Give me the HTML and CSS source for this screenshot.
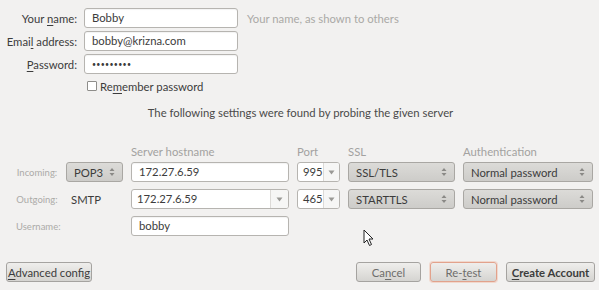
FILE: index.html
```html
<!DOCTYPE html>
<html lang="en">
<head>
  <meta charset="UTF-8" />
  <title>Mail Account Setup</title>
  <link rel="stylesheet" href="styles.css">
</head>
<body>
  <div class="dialog">
    <div class="identity">
      <label class="field-label">Your <u>n</u>ame:</label>
      <div class="entry">Bobby</div>
      <span class="hint">Your name, as shown to others</span>

      <label class="field-label">Emai<u>l</u> address:</label>
      <div class="entry">bobby@krizna.com</div>
      <span></span>

      <label class="field-label"><u>P</u>assword:</label>
      <div class="entry dots">&bull;&bull;&bull;&bull;&bull;&bull;&bull;&bull;&bull;</div>
      <span></span>
    </div>

    <div class="remember"><span class="check"></span>Re<u>m</u>ember password</div>

    <p class="probe-note">The following settings were found by probing the given server</p>

    <div class="server">
      <span></span>
      <span></span>
      <span class="col-head">Server hostname</span>
      <span class="col-head">Port</span>
      <span class="col-head">SSL</span>
      <span class="col-head">Authentication</span>

      <span class="row-label">Incoming:</span>
      <div class="combo">POP3<svg class="spin" width="6" height="10" viewBox="0 0 6 10"><path d="M3 1 L5.5 4 H0.5 Z M3 9 L0.5 6 H5.5 Z" fill="#8a8986"/></svg></div>
      <div class="entry">172.27.6.59</div>
      <div class="entry-combo"><span class="value">995</span><span class="drop"><svg width="7" height="5" viewBox="0 0 7 5"><path d="M0.5 0.5 H6.5 L3.5 4.5 Z" fill="#9a9996"/></svg></span></div>
      <div class="combo">SSL/TLS<svg class="spin" width="6" height="10" viewBox="0 0 6 10"><path d="M3 1 L5.5 4 H0.5 Z M3 9 L0.5 6 H5.5 Z" fill="#8a8986"/></svg></div>
      <div class="combo">Normal password<svg class="spin" width="6" height="10" viewBox="0 0 6 10"><path d="M3 1 L5.5 4 H0.5 Z M3 9 L0.5 6 H5.5 Z" fill="#8a8986"/></svg></div>

      <span class="row-label">Outgoing:</span>
      <span class="proto">SMTP</span>
      <div class="entry-combo"><span class="value">172.27.6.59</span><span class="drop wide"><svg width="7" height="5" viewBox="0 0 7 5"><path d="M0.5 0.5 H6.5 L3.5 4.5 Z" fill="#9a9996"/></svg></span></div>
      <div class="entry-combo"><span class="value">465</span><span class="drop"><svg width="7" height="5" viewBox="0 0 7 5"><path d="M0.5 0.5 H6.5 L3.5 4.5 Z" fill="#9a9996"/></svg></span></div>
      <div class="combo">STARTTLS<svg class="spin" width="6" height="10" viewBox="0 0 6 10"><path d="M3 1 L5.5 4 H0.5 Z M3 9 L0.5 6 H5.5 Z" fill="#8a8986"/></svg></div>
      <div class="combo">Normal password<svg class="spin" width="6" height="10" viewBox="0 0 6 10"><path d="M3 1 L5.5 4 H0.5 Z M3 9 L0.5 6 H5.5 Z" fill="#8a8986"/></svg></div>

      <span class="row-label">Username:</span>
      <span></span>
      <div class="entry">bobby</div>
    </div>

    <div class="footer">
      <button class="btn advanced"><u>A</u>dvanced config</button>
      <div class="actions">
        <button class="btn cancel">Ca<u>n</u>cel</button>
        <button class="btn retest">Re-<u>t</u>est</button>
        <button class="btn create"><u>C</u>reate Account</button>
      </div>
    </div>

    <svg class="pointer" width="12" height="18" viewBox="0 0 12 18"><path d="M1 1 V14 L4 11 L6.5 16.5 L8.5 15.5 L6 10 H10 Z" fill="#fff" stroke="#222" stroke-width="1"/></svg>
  </div>
</body>
</html>
```

FILE: styles.css
```css
body {
  margin: 0;
  background: #f2f1f0;
  color: #3c3c3c;
  font-family: Lato, sans-serif;
  font-size: 11.3px;
}
u {
  text-underline-offset: 2px;
}
.dialog {
  position: relative;
  height: 290px;
  box-sizing: border-box;
  padding: 8px 4px 0 6px;
}
.identity {
  display: grid;
  grid-template-columns: 71px 154px auto;
  grid-auto-rows: 20px;
  column-gap: 7px;
  row-gap: 3px;
  align-items: center;
}
.field-label {
  text-align: right;
  white-space: nowrap;
}
.hint {
  color: #aaa9a6;
  padding-left: 2px;
}
.entry {
  height: 20px;
  box-sizing: border-box;
  border: 1px solid #b6b4b0;
  border-radius: 3px;
  background: #fff;
  padding: 0 7px;
  line-height: 18px;
  box-shadow: inset 0 1px 1px rgba(0, 0, 0, 0.05);
  white-space: nowrap;
}
.dots {
  font-size: 7px;
  letter-spacing: 0.3px;
}
.remember {
  display: flex;
  align-items: center;
  margin: 5px 0 0 81px;
  height: 14px;
}
.check {
  width: 8px;
  height: 8px;
  border: 1px solid #8e8d8a;
  border-radius: 1px;
  background: #fff;
  margin-right: 3px;
}
.probe-note {
  margin: 12px 0 0;
  text-align: center;
  line-height: 16px;
  color: #4a4a4a;
}
.server {
  display: grid;
  grid-template-columns: 52px 57px 158px 43px 107px 130px;
  grid-template-rows: 10px 20px 20px 20px;
  column-gap: 8px;
  row-gap: 7px;
  align-items: center;
  margin-top: 24px;
}
.server .col-head {
  color: #a3a2a0;
  align-self: start;
  line-height: 14px;
}
.row-label {
  color: #acaba8;
  font-size: 9.5px;
  text-align: center;
  padding-left: 10px;
}
.proto {
  padding-left: 5px;
}
.combo {
  height: 20px;
  box-sizing: border-box;
  border: 1px solid #a9a7a3;
  border-radius: 3px;
  background: linear-gradient(#dcdbd8, #cdccc9);
  padding: 0 7px 0 7px;
  display: flex;
  align-items: center;
  justify-content: space-between;
  white-space: nowrap;
}
.entry-combo {
  height: 20px;
  box-sizing: border-box;
  border: 1px solid #b6b4b0;
  border-radius: 3px;
  background: #fff;
  display: flex;
  align-items: stretch;
}
.entry-combo .value {
  flex: 1;
  padding-left: 5px;
  line-height: 18px;
}
.drop {
  width: 16px;
  border-left: 1px solid #dcdad7;
  background: #f6f6f5;
  border-radius: 0 2px 2px 0;
  display: flex;
  align-items: center;
  justify-content: center;
}
.drop.wide {
  width: 17px;
}
.footer {
  display: flex;
  justify-content: space-between;
  margin-top: 26px;
}
.actions {
  display: flex;
  gap: 9px;
}
.btn {
  height: 20px;
  box-sizing: border-box;
  border: 1px solid #a5a3a0;
  border-radius: 3px;
  background: linear-gradient(#efeeec, #d5d4d1);
  font-family: inherit;
  font-size: 11.3px;
  color: #3c3c3c;
  padding: 0;
  white-space: nowrap;
}
.advanced {
  width: 86px;
}
.cancel {
  width: 65px;
  color: #6e6d6b;
}
.retest {
  width: 67px;
  color: #6e6d6b;
  border-color: #e2a28c;
  box-shadow: 0 0 0 1px rgba(240, 170, 140, 0.35);
}
.create {
  width: 89px;
  font-weight: bold;
}
.pointer {
  position: absolute;
  left: 363px;
  top: 229px;
}
```
